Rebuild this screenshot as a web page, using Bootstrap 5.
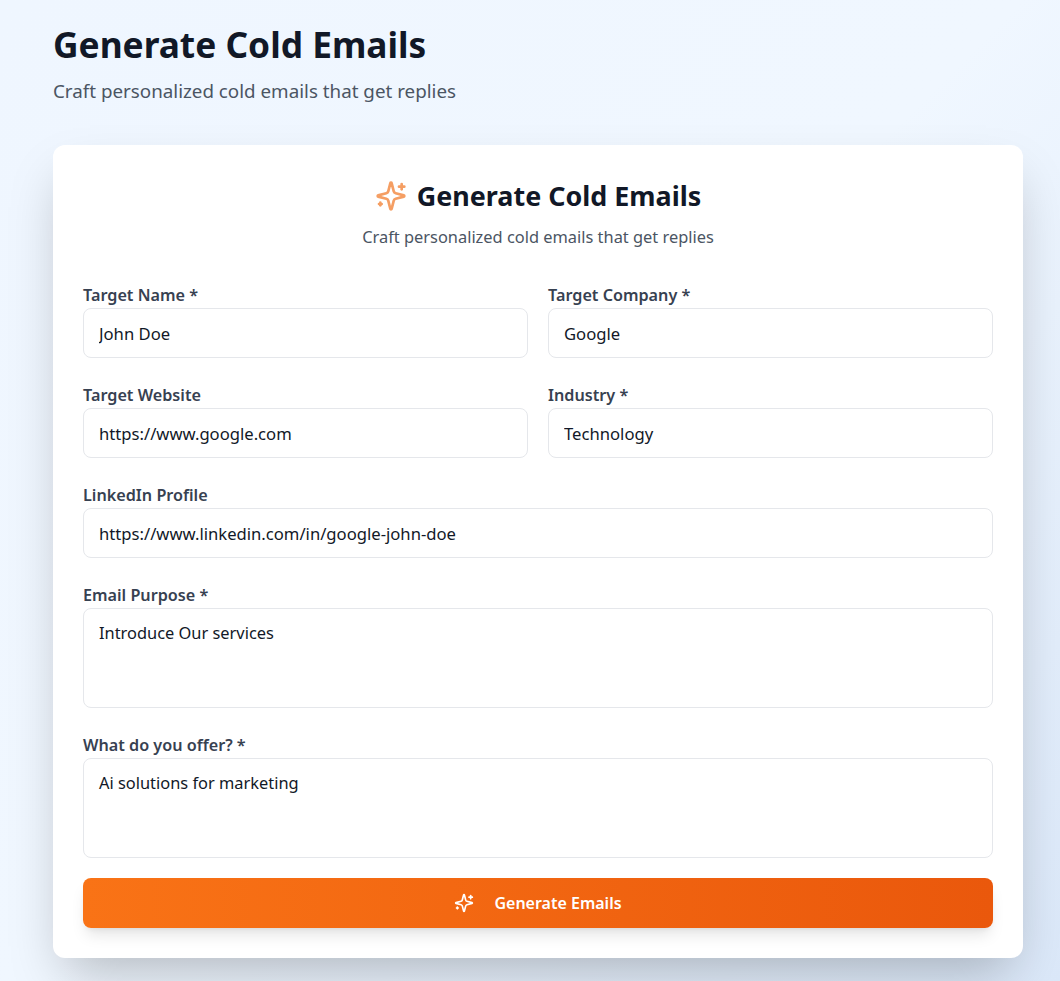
<!doctype html>
<html lang="en">

<head>
    <meta charset="UTF-8">
    <meta name="viewport" content="width=device-width, initial-scale=1.0">
    <title>Generate Cold Emails</title>
    <link href="https://cdn.jsdelivr.net/npm/bootstrap@5.3.0/dist/css/bootstrap.min.css" rel="stylesheet">
    <style>
        html, body { height: 100%; }
        body {
            font-family: "Noto Sans", "Open Sans", sans-serif;
            background: linear-gradient(135deg, #eff6ff 0%, #f0f7ff 50%, #dbe8f9 100%);
            overflow: hidden;
        }
        .page-wrap { padding: 20px 37px 0 53px; }
        .page-title { font-size: 35.3px; font-weight: 700; line-height: 48px; color: #111827; margin: 0 0 9px; }
        .page-sub { font-size: 18.8px; line-height: 28px; color: #4b5563; margin: 0 0 40px; }
        .form-card {
            border: 0;
            border-radius: 12px;
            padding: 30px;
            box-shadow: 0 25px 50px -12px rgba(0, 0, 0, .25);
        }
        .card-title-row { font-size: 26.9px; font-weight: 700; line-height: 42px; color: #111827; margin: 0 0 8px; }
        .card-title-row svg { color: #f59e63; }
        .card-sub { font-size: 16.4px; line-height: 24px; color: #4b5563; margin: 0 0 34px; }
        .field-label { font-size: 16.2px; font-weight: 600; line-height: 24px; color: #374151; margin: 0 0 1px; display: block; height: 24px; }
        .field-input {
            height: 50px;
            padding: 12px 15px;
            font-size: 16.65px;
            line-height: 24px;
            color: #111827;
            border: 1px solid #e5e7eb;
            border-radius: 8px;
        }
        textarea.field-input { height: 100px; resize: none; font-size: 16.4px; }
        .field-group { margin-bottom: 25px; }
        .field-group.last-field { margin-bottom: 20px; }
        .row-fields { --bs-gutter-x: 20px; --bs-gutter-y: 0; }
        .submit-btn {
            height: 50px;
            border: 0;
            border-radius: 8px;
            color: #fff;
            font-size: 16px;
            font-weight: 600;
            background: linear-gradient(90deg, #f97316, #ea580c);
            box-shadow: 0 10px 15px -3px rgba(0, 0, 0, .1), 0 4px 6px -4px rgba(0, 0, 0, .1);
            gap: 20px;
        }
        .submit-btn:hover { color: #fff; background: linear-gradient(90deg, #f97316, #ea580c); }
        .title-gap { gap: 10px; }
    </style>
</head>

<body>
    <div class="page-wrap">
        <h1 class="page-title">Generate Cold Emails</h1>
        <p class="page-sub">Craft personalized cold emails that get replies</p>

        <div class="card form-card">
            <h2 class="card-title-row d-flex align-items-center justify-content-center title-gap">
                <svg width="32" height="32" viewBox="0 0 24 24" fill="none" stroke="currentColor" stroke-width="2" stroke-linecap="round" stroke-linejoin="round">
                    <path d="M9.937 15.5A2 2 0 0 0 8.5 14.063l-6.135-1.582a.5.5 0 0 1 0-.962L8.5 9.936A2 2 0 0 0 9.937 8.5l1.582-6.135a.5.5 0 0 1 .963 0L14.063 8.5A2 2 0 0 0 15.5 9.937l6.135 1.581a.5.5 0 0 1 0 .964L15.5 14.063a2 2 0 0 0-1.437 1.437l-1.582 6.135a.5.5 0 0 1-.963 0z"/>
                    <path d="M20 3v4"/><path d="M22 5h-4"/><path d="M4 17v2"/><path d="M5 18H3"/>
                </svg>
                Generate Cold Emails
            </h2>
            <p class="card-sub text-center">Craft personalized cold emails that get replies</p>

            <form>
                <div class="row row-fields">
                    <div class="col-6 field-group">
                        <label class="field-label" for="targetName">Target Name *</label>
                        <input type="text" class="form-control field-input" id="targetName" value="John Doe">
                    </div>
                    <div class="col-6 field-group">
                        <label class="field-label" for="targetCompany">Target Company *</label>
                        <input type="text" class="form-control field-input" id="targetCompany" value="Google">
                    </div>
                    <div class="col-6 field-group">
                        <label class="field-label" for="targetWebsite">Target Website</label>
                        <input type="text" class="form-control field-input" id="targetWebsite" value="https://www.google.com">
                    </div>
                    <div class="col-6 field-group">
                        <label class="field-label" for="industry">Industry *</label>
                        <input type="text" class="form-control field-input" id="industry" value="Technology">
                    </div>
                </div>
                <div class="field-group">
                    <label class="field-label" for="linkedin">LinkedIn Profile</label>
                    <input type="text" class="form-control field-input" id="linkedin" value="https://www.linkedin.com/in/google-john-doe">
                </div>
                <div class="field-group">
                    <label class="field-label" for="purpose">Email Purpose *</label>
                    <textarea class="form-control field-input" id="purpose">Introduce Our services</textarea>
                </div>
                <div class="field-group last-field">
                    <label class="field-label" for="offer">What do you offer? *</label>
                    <textarea class="form-control field-input" id="offer">Ai solutions for marketing</textarea>
                </div>
                <button type="button" class="btn submit-btn w-100 d-flex align-items-center justify-content-center">
                    <svg width="20" height="20" viewBox="0 0 24 24" fill="none" stroke="currentColor" stroke-width="2" stroke-linecap="round" stroke-linejoin="round">
                        <path d="M9.937 15.5A2 2 0 0 0 8.5 14.063l-6.135-1.582a.5.5 0 0 1 0-.962L8.5 9.936A2 2 0 0 0 9.937 8.5l1.582-6.135a.5.5 0 0 1 .963 0L14.063 8.5A2 2 0 0 0 15.5 9.937l6.135 1.581a.5.5 0 0 1 0 .964L15.5 14.063a2 2 0 0 0-1.437 1.437l-1.582 6.135a.5.5 0 0 1-.963 0z"/>
                        <path d="M20 3v4"/><path d="M22 5h-4"/><path d="M4 17v2"/><path d="M5 18H3"/>
                    </svg>
                    Generate Emails
                </button>
            </form>
        </div>
    </div>
    <script src="https://cdn.jsdelivr.net/npm/bootstrap@5.3.0/dist/js/bootstrap.bundle.min.js"></script>
</body>

</html>
